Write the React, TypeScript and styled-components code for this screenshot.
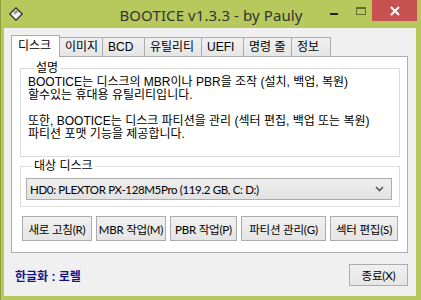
import React from "react";
import styled, { createGlobalStyle } from "styled-components";

const GlobalStyle = createGlobalStyle`
  html, body {
    margin: 0;
    padding: 0;
    background: #b7c95c;
  }
  * {
    box-sizing: border-box;
  }
`;

const UI_FONT = `"Liberation Sans", "Noto Sans CJK KR", sans-serif`;
const NARROW_FONT = `Lato, "Noto Sans CJK KR", sans-serif`;

const tabs = [
  { label: "디스크", w: 49 },
  { label: "이미지", w: 43 },
  { label: "BCD", w: 42 },
  { label: "유틸리티", w: 57 },
  { label: "UEFI", w: 42 },
  { label: "명령 줄", w: 48 },
  { label: "정보", w: 39 },
];

const actions = [
  { label: "새로 고침(R)", w: 70 },
  { label: "MBR 작업(M)", w: 70 },
  { label: "PBR 작업(P)", w: 67 },
  { label: "파티션 관리(G)", w: 85 },
  { label: "섹터 편집(S)", w: 68 },
];

const App = () => {
  return (
    <>
      <GlobalStyle />
      <Window>
        <TitleBar>
          <AppIcon viewBox="0 0 16 16">
            <path d="M8 1 L15 8 L8 15 L1 8 Z" fill="#1c1c1c" />
            <path d="M8 2.6 L13.4 8 L8 13.4 L2.6 8 Z" fill="#e8e8e8" />
            <path d="M5.2 6.4 L8.4 3.2 L11.2 6 L8 9.2 Z" fill="#9a9a9a" />
            <path d="M6 10 L10 6 L11 7 L7 11 Z" fill="#ffffff" />
          </AppIcon>
          <Title>BOOTICE v1.3.3 - by Pauly</Title>
          <Controls>
            <CtrlButton>
              <MinGlyph />
            </CtrlButton>
            <CtrlButton>
              <MaxGlyph />
            </CtrlButton>
            <CloseButton>
              <svg width="10" height="10" viewBox="0 0 10 10">
                <path
                  d="M1 1 L9 9 M9 1 L1 9"
                  stroke="#ffffff"
                  strokeWidth="2"
                />
              </svg>
            </CloseButton>
          </Controls>
        </TitleBar>

        <Client>
          <TabStrip>
            {tabs.map((t, i) => (
              <Tab key={t.label} $w={t.w} $active={i === 0}>
                {t.label}
              </Tab>
            ))}
          </TabStrip>

          <Panel>
            <Group>
              <Legend>설명</Legend>
              <Desc>
                <p>BOOTICE는 디스크의 MBR이나 PBR을 조작 (설치, 백업, 복원)</p>
                <p>할수있는 휴대용 유틸리티입니다.</p>
                <p>&nbsp;</p>
                <p>또한, BOOTICE는 디스크 파티션을 관리 (섹터 편집, 백업 또는 복원)</p>
                <p>파티션 포맷 기능을 제공합니다.</p>
              </Desc>
            </Group>

            <Group $tight>
              <Legend>대상 디스크</Legend>
              <Combo>
                <span>HD0: PLEXTOR PX-128M5Pro (119.2 GB, C: D:)</span>
                <svg width="9" height="6" viewBox="0 0 9 6">
                  <path
                    d="M1 1 L4.5 4.5 L8 1"
                    fill="none"
                    stroke="#555"
                    strokeWidth="1.6"
                  />
                </svg>
              </Combo>
            </Group>

            <ActionRow>
              {actions.map((a) => (
                <PushButton key={a.label} $w={a.w}>
                  {a.label}
                </PushButton>
              ))}
            </ActionRow>
          </Panel>

          <Footer>
            <Credit>한글화 : 로렐</Credit>
            <PushButton $w={59} $h={22}>
              종료(X)
            </PushButton>
          </Footer>
        </Client>
      </Window>
    </>
  );
};

const Window = styled.div`
  width: 421px;
  height: 300px;
  background: #b7c95c;
  border-left: 1px solid #8e9f3c;
  display: flex;
  flex-direction: column;
  overflow: hidden;
  font-family: ${UI_FONT};
`;

const TitleBar = styled.div`
  height: 28px;
  display: grid;
  grid-template-columns: 1fr auto 1fr;
  align-items: start;
`;

const AppIcon = styled.svg`
  width: 16px;
  height: 16px;
  margin: 6px 0 0 7px;
`;

const Title = styled.div`
  font-family: "Noto Sans", "Liberation Sans", sans-serif;
  font-size: 15px;
  color: #333333;
  line-height: 20px;
  margin-top: 5px;
  letter-spacing: 0.1px;
`;

const Controls = styled.div`
  justify-self: end;
  display: flex;
  align-items: flex-start;
  margin-right: 4px;
`;

const CtrlButton = styled.div`
  width: 26px;
  height: 21px;
  display: flex;
  align-items: center;
  justify-content: center;
`;

const MinGlyph = styled.div`
  width: 8px;
  height: 2px;
  background: #222;
  margin-top: 7px;
  margin-left: 2px;
`;

const MaxGlyph = styled.div`
  width: 10px;
  height: 8px;
  border: 1px solid #5f6d2a;
  border-top-width: 2px;
  margin-left: 4px;
`;

const CloseButton = styled.div`
  width: 45px;
  height: 21px;
  background: #c75050;
  display: flex;
  align-items: center;
  justify-content: center;
`;

const Client = styled.div`
  flex: 1;
  margin: 0 5px 4px 3px;
  background: #f0f0f0;
  display: flex;
  flex-direction: column;
  padding: 7px 8px 0 7px;
`;

const TabStrip = styled.div`
  display: flex;
  align-items: flex-end;
  height: 22px;
  position: relative;
  z-index: 1;
  margin-bottom: -1px;
`;

const Tab = styled.div<{ $w: number; $active?: boolean }>`
  width: ${(p) => p.$w}px;
  height: ${(p) => (p.$active ? 22 : 20)}px;
  border: 1px solid #acacac;
  border-bottom: ${(p) => (p.$active ? "none" : "1px solid #acacac")};
  border-left: ${(p) => (p.$active ? "1px solid #acacac" : "none")};
  background: ${(p) =>
    p.$active ? "#ffffff" : "linear-gradient(#f0f0f0, #e5e5e5)"};
  font-size: 12px;
  color: #000;
  padding: ${(p) => (p.$active ? "3px 0 0 6px" : "2px 0 0 5px")};
  line-height: 14px;
  white-space: nowrap;
`;

const Panel = styled.div`
  height: 197px;
  background: #ffffff;
  border: 1px solid #acacac;
  padding: 4px 7px 0 8px;
  display: flex;
  flex-direction: column;
`;

const Group = styled.fieldset<{ $tight?: boolean }>`
  margin: 0 0 ${(p) => (p.$tight ? 0 : 2)}px 0;
  border: 1px solid #dcdcdc;
  padding: ${(p) => (p.$tight ? "5px 7px 7px 5px" : "1px 6px 5px 7px")};
  height: ${(p) => (p.$tight ? 48 : 96)}px;
  min-width: 0;
`;

const Legend = styled.legend`
  font-size: 12px;
  line-height: 14px;
  color: #000;
  padding: 0 2px;
  margin-left: 6px;
`;

const Desc = styled.div`
  font-size: 12px;
  line-height: 13px;
  color: #000;
  p {
    margin: 0;
    white-space: nowrap;
  }
`;

const Combo = styled.div`
  height: 22px;
  border: 1px solid #acacac;
  background: linear-gradient(#eeeeee, #e2e2e2);
  display: flex;
  align-items: center;
  justify-content: space-between;
  padding: 0 7px 0 3px;
  font-family: ${NARROW_FONT};
  font-size: 11.5px;
  letter-spacing: -0.35px;
  color: #000;
  white-space: nowrap;
`;

const ActionRow = styled.div`
  display: flex;
  gap: 4px;
  margin: 9px 0 0 2px;
`;

const PushButton = styled.div<{ $w: number; $h?: number }>`
  width: ${(p) => p.$w}px;
  height: ${(p) => p.$h ?? 25}px;
  border: 1px solid #acacac;
  background: linear-gradient(#f0f0f0, #e5e5e5);
  display: flex;
  align-items: center;
  justify-content: center;
  font-family: ${NARROW_FONT};
  font-size: 11.5px;
  letter-spacing: -0.2px;
  color: #000;
  white-space: nowrap;
  flex-shrink: 0;
`;

const Footer = styled.div`
  flex: 1;
  display: flex;
  align-items: center;
  justify-content: space-between;
  padding: 1px 0 0 4px;
`;

const Credit = styled.div`
  font-size: 12px;
  font-weight: bold;
  color: #14148a;
`;

export default App;
